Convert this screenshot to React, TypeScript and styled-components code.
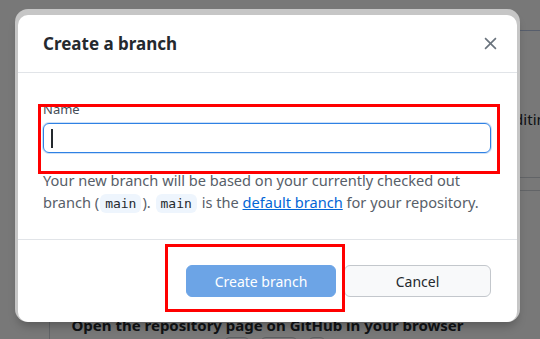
import styled, { createGlobalStyle } from 'styled-components';

const GlobalStyle = createGlobalStyle`
  html, body {
    margin: 0;
    padding: 0;
    width: 540px;
    height: 339px;
    overflow: hidden;
    background: #ffffff;
  }
  body {
    font-family: "Noto Sans", "Open Sans", sans-serif;
    color: #24292e;
  }
  * {
    box-sizing: border-box;
  }
`;

const Screen = styled.div`
  position: relative;
  width: 540px;
  height: 339px;
  overflow: hidden;
`;

const AppPage = styled.div`
  display: flex;
  flex-direction: column;
  height: 100%;
  padding-top: 30px;
`;

const InfoCard = styled.div`
  display: flex;
  justify-content: flex-end;
  align-items: flex-start;
  flex-shrink: 0;
  height: 148px;
  margin-right: -15px;
  margin-left: 60px;
  padding-top: 77px;
  border-top: 1px solid #b9c7e6;
  border-bottom: 1px solid #d1d5da;
  font-size: 15px;
  line-height: 22px;
  white-space: nowrap;
  color: #24292e;
`;

const ActionCard = styled.div`
  display: flex;
  flex-direction: column;
  align-items: center;
  flex-shrink: 0;
  gap: 2px;
  margin-top: 12px;
  margin-left: 49px;
  padding-top: 124px;
  border-top: 1px solid #d1d5da;
  border-left: 1px solid #d1d5da;
`;

const ActionTitle = styled.div`
  font-size: 15px;
  line-height: 20px;
  font-weight: 700;
  white-space: nowrap;
  margin-left: -55px;
`;

const KeyRow = styled.div`
  display: flex;
  gap: 10px;
  margin-left: -40px;
`;

const Key = styled.span<{ $w: number }>`
  display: block;
  width: ${(p) => p.$w}px;
  height: 18px;
  border: 1px solid #c7cbd0;
  border-radius: 6px;
`;

const Overlay = styled.div`
  position: absolute;
  inset: 0;
  background: rgba(0, 0, 0, 0.53);
`;

const Dialog = styled.div`
  position: absolute;
  left: 18px;
  top: 15px;
  width: 499px;
  height: 307px;
  display: flex;
  flex-direction: column;
  background: #ffffff;
  border-radius: 10px;
  box-shadow: 0 -3px 0 3px #c6c6c6, 0 4px 10px rgba(0, 0, 0, 0.25);
`;

const DialogHeader = styled.div`
  display: flex;
  align-items: center;
  justify-content: space-between;
  height: 58px;
  padding: 0 17px 0 25px;
  border-bottom: 1px solid #e1e4e8;
`;

const Title = styled.h1`
  margin: 0;
  font-size: 17px;
  font-weight: 700;
  color: #24292e;
`;

const CloseButton = styled.button`
  display: flex;
  align-items: center;
  justify-content: center;
  width: 20px;
  height: 20px;
  padding: 0;
  border: none;
  background: none;
  color: #6a737d;
`;

const DialogBody = styled.div`
  display: flex;
  flex-direction: column;
  height: 167px;
  padding: 27px 26px 0 25px;
  border-bottom: 1px solid #e1e4e8;
`;

const Label = styled.label`
  font-size: 13px;
  line-height: 18px;
  color: #444d56;
`;

const InputBox = styled.div`
  display: flex;
  align-items: center;
  height: 30px;
  margin-top: 5px;
  padding: 0 7px;
  border: 1px solid #2f81e4;
  border-radius: 6px;
  box-shadow: 0 0 0 1px rgba(3, 102, 214, 0.2);
`;

const Caret = styled.span`
  display: block;
  width: 2px;
  height: 19px;
  background: #24292e;
`;

const Description = styled.p`
  margin: 16px 0 0;
  font-size: 14.6px;
  line-height: 22px;
  color: #586069;
`;

const Code = styled.code`
  padding: 2px 5px;
  margin: 0 1px;
  font-family: "DejaVu Sans Mono", "Liberation Mono", monospace;
  font-size: 13px;
  color: #24292e;
  background: #eef5fd;
  border-radius: 6px;
`;

const Link = styled.a`
  color: #0366d6;
  text-decoration: underline;
`;

const DialogFooter = styled.div`
  display: flex;
  justify-content: flex-end;
  align-items: flex-start;
  gap: 8px;
  flex: 1;
  padding: 25px 26px 0 0;
`;

const Button = styled.button<{ $primary?: boolean; $w: number }>`
  width: ${(p) => p.$w}px;
  height: 32px;
  border-radius: 6px;
  font-family: inherit;
  font-size: 14px;
  border: 1px solid ${(p) => (p.$primary ? '#6ca4e6' : '#c3c7cc')};
  background: ${(p) => (p.$primary ? '#6ca4e6' : '#f8f9fa')};
  color: ${(p) => (p.$primary ? '#ffffff' : '#24292e')};
`;

const Marker = styled.div<{ $x: number; $y: number; $w: number; $h: number }>`
  position: absolute;
  left: ${(p) => p.$x}px;
  top: ${(p) => p.$y}px;
  width: ${(p) => p.$w}px;
  height: ${(p) => p.$h}px;
  border: 3px solid #ff0000;
`;

export default function App() {
  return (
    <Screen>
      <GlobalStyle />
      <AppPage>
        <InfoCard>Open the repository in your external editor for editing</InfoCard>
        <ActionCard>
          <ActionTitle>Open the repository page on GitHub in your browser</ActionTitle>
          <KeyRow>
            <Key $w={26} />
            <Key $w={38} />
            <Key $w={18} />
          </KeyRow>
        </ActionCard>
      </AppPage>
      <Overlay />
      <Dialog>
        <DialogHeader>
          <Title>Create a branch</Title>
          <CloseButton aria-label="Close">
            <svg width="13" height="13" viewBox="0 0 12 12">
              <path d="M1 1L11 11M11 1L1 11" stroke="currentColor" strokeWidth="1.5" />
            </svg>
          </CloseButton>
        </DialogHeader>
        <DialogBody>
          <Label>Name</Label>
          <InputBox>
            <Caret />
          </InputBox>
          <Description>
            Your new branch will be based on your currently checked out branch (<Code>main</Code>).{' '}
            <Code>main</Code> is the <Link href="#">default branch</Link> for your repository.
          </Description>
        </DialogBody>
        <DialogFooter>
          <Button $primary $w={150}>Create branch</Button>
          <Button $w={147}>Cancel</Button>
        </DialogFooter>
      </Dialog>
      <Marker $x={38} $y={104} $w={462} $h={70} />
      <Marker $x={165} $y={244} $w={180} $h={68} />
    </Screen>
  );
}
